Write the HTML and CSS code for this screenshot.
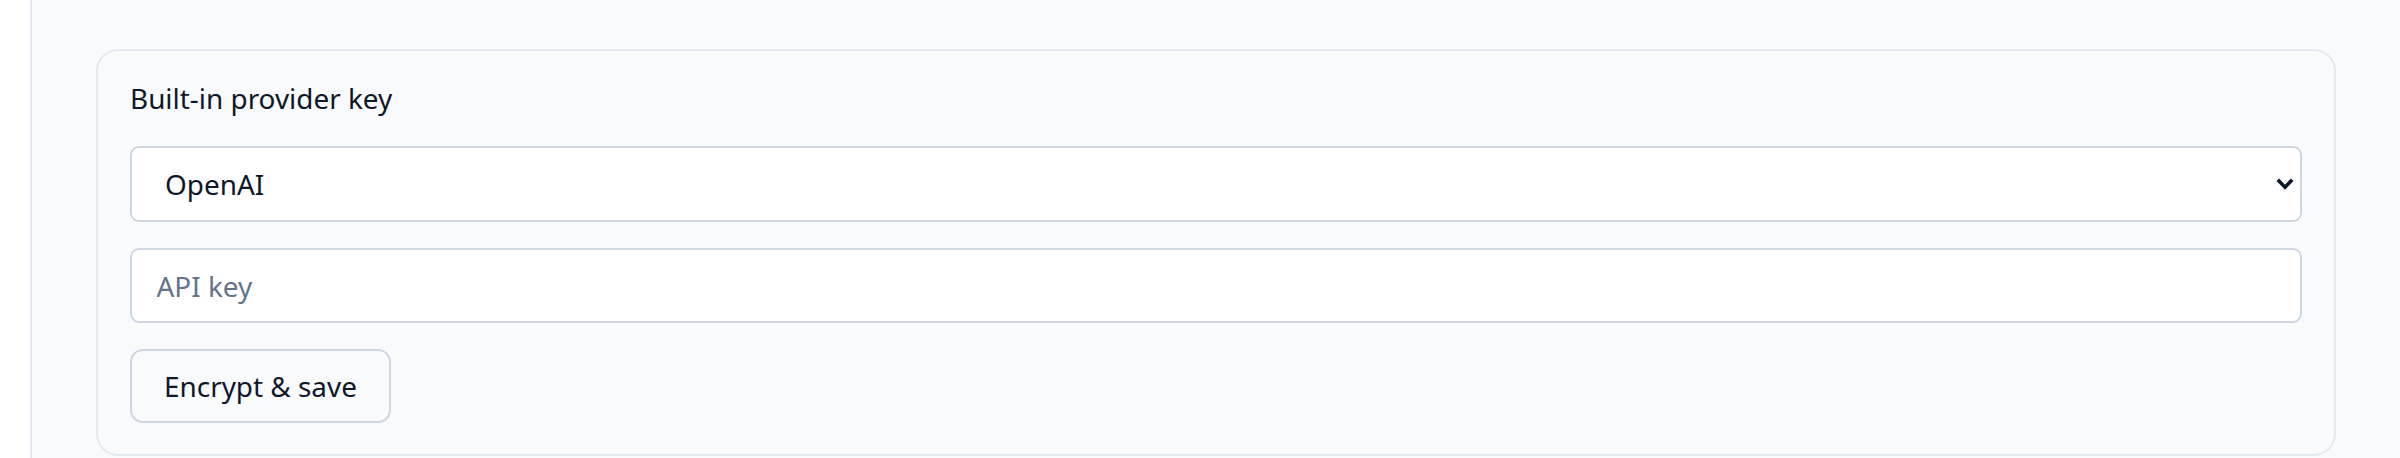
FILE: index.html
```html
<!DOCTYPE html>
<html lang="en">
<head>
<meta charset="utf-8">
<title>Built-in provider key</title>
<link rel="stylesheet" href="styles.css">
</head>
<body>
<div class="layout">
  <aside class="sidebar"></aside>
  <main class="main">
    <section class="card">
      <label class="card-label" for="provider">Built-in provider key</label>
      <select id="provider" class="field select">
        <option>OpenAI</option>
        <option>Anthropic</option>
      </select>
      <input class="field input" type="password" placeholder="API key">
      <button class="btn" type="button">Encrypt &amp; save</button>
    </section>
  </main>
</div>
</body>
</html>
```

FILE: styles.css
```css
* { box-sizing: border-box; }

html, body {
  margin: 0;
  height: 100%;
}

body {
  font-family: "Noto Sans", "Open Sans", sans-serif;
  color: #0f172a;
  background: #ffffff;
}

.layout {
  display: flex;
  min-height: 100vh;
}

.sidebar {
  width: 32px;
  flex: 0 0 32px;
  background: #ffffff;
  border-right: 2px solid #e2e8f0;
}

.main {
  flex: 1;
  background: #f8fafc;
  padding: 49px 64px 0 64px;
}

.card {
  display: flex;
  flex-direction: column;
  align-items: stretch;
  gap: 26px;
  background: #f8fafc;
  border: 2px solid #e3e9f1;
  border-radius: 22px;
  padding: 27px 32px 31px 32px;
}

.card-label {
  font-size: 27.9px;
  line-height: 41px;
  margin-bottom: 1px;
  color: #0f172a;
}

.field {
  width: 100%;
  font-family: inherit;
  font-size: 27.9px;
  color: #0f172a;
  background-color: #ffffff;
  border: 2px solid #cdd6e2;
  border-radius: 9px;
  outline: none;
  margin: 0;
}

.select {
  height: 76px;
  padding: 0 40px 0 33px;
  appearance: none;
  -webkit-appearance: none;
  background-image: url("data:image/svg+xml,%3Csvg xmlns='http://www.w3.org/2000/svg' width='18' height='12' viewBox='0 0 18 12'%3E%3Cpath d='M1.8 1.8L9 9.2L16.2 1.8' fill='none' stroke='%230f172a' stroke-width='3.6'/%3E%3C/svg%3E");
  background-repeat: no-repeat;
  background-position: right 6px center;
  background-size: 18px 12px;
}

.input {
  height: 75px;
  padding: 0 24px 0 24.5px;
}

.input::placeholder {
  color: #64748b;
  opacity: 1;
}

.btn {
  align-self: flex-start;
  height: 74px;
  padding: 0 32px;
  font-family: inherit;
  font-size: 27.9px;
  color: #0f172a;
  background: #f8fafc;
  border: 2px solid #cdd6e2;
  border-radius: 13px;
  cursor: pointer;
}
```
